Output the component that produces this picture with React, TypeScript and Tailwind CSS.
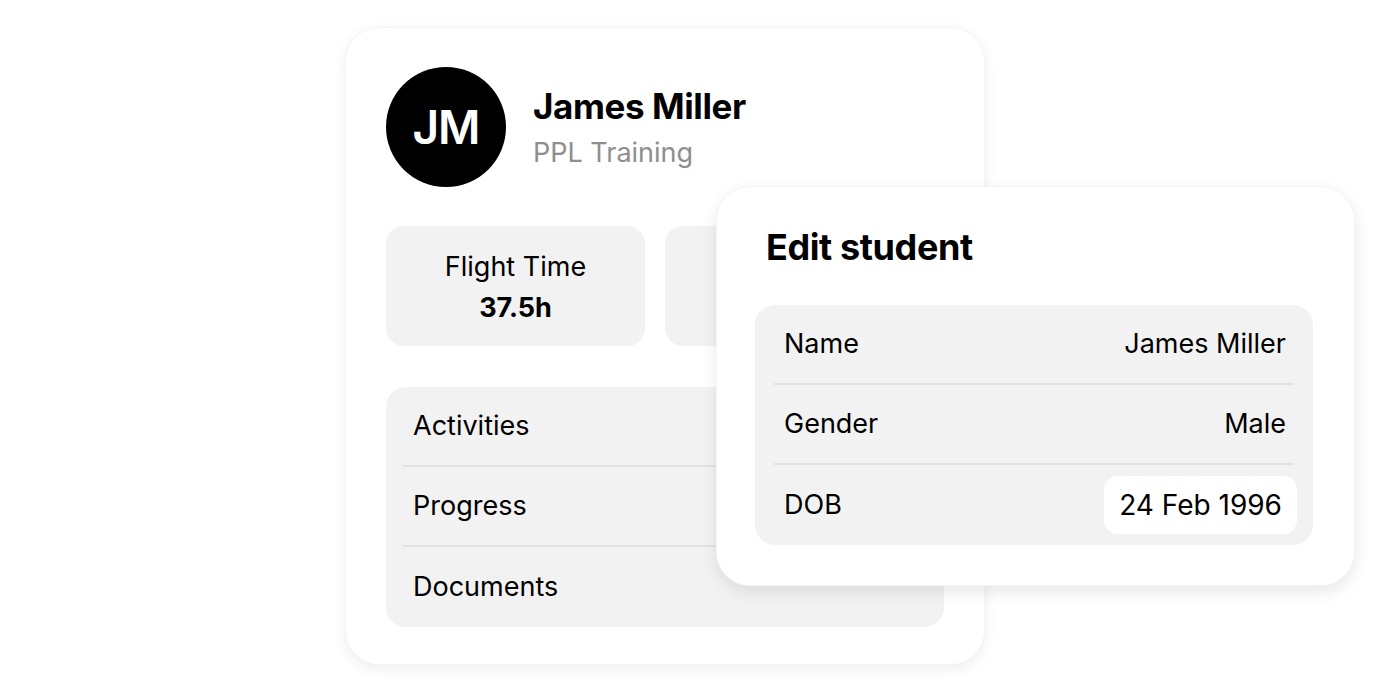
import React from 'react';

const font = { fontFamily: 'Inter, "Noto Sans", sans-serif' };

const menuItems = ['Activities', 'Progress', 'Documents'];

const fields: { label: string; value: string; picker?: boolean }[] = [
  { label: 'Name', value: 'James Miller' },
  { label: 'Gender', value: 'Male' },
  { label: 'DOB', value: '24 Feb 1996', picker: true },
];

function StatCard({ label, value }: { label?: string; value?: string }) {
  return (
    <div className="h-[120px] rounded-[18px] bg-[#f2f2f2] flex flex-col items-center justify-center pt-[2px]">
      {label && <span className="text-[27px] leading-[41px] text-black">{label}</span>}
      {value && <span className="text-[27px] leading-[41px] font-bold text-black">{value}</span>}
    </div>
  );
}

export default function App() {
  return (
    <div className="relative w-[1400px] h-[700px] bg-white overflow-hidden" style={font}>
      {/* Student profile card */}
      <div className="ml-[345px] mt-[27px] w-[640px] h-[638px] rounded-[34px] bg-white border border-black/[0.04] shadow-[0_4px_14px_rgba(0,0,0,0.07)] px-[40px] pt-[39px]">
        <div className="flex items-center gap-[27px]">
          <div className="w-[120px] h-[120px] rounded-full bg-black flex items-center justify-center">
            <span className="text-white text-[46px] font-semibold tracking-[-1px]">JM</span>
          </div>
          <div className="flex flex-col pt-[5px]">
            <span className="text-[35px] leading-[46px] font-bold text-black tracking-[-0.4px]">James Miller</span>
            <span className="text-[27px] leading-[48px] text-[#8e8e8e]">PPL Training</span>
          </div>
        </div>

        <div className="mt-[39px] grid grid-cols-[259px_259px] gap-[20px]">
          <StatCard label="Flight Time" value="37.5h" />
          {/* second stat card is covered by the dialog */}
          <StatCard />
        </div>

        <div className="mt-[41px] w-[558px] rounded-[20px] bg-[#f2f2f2] pl-[17px]">
          {menuItems.map((item, i) => (
            <div
              key={item}
              className={`h-[80px] flex items-center pl-[10px] ${i < menuItems.length - 1 ? 'border-b-2 border-[#e2e2e2]' : ''}`}
            >
              <span className="text-[27px] text-black">{item}</span>
            </div>
          ))}
        </div>
      </div>

      {/* Edit dialog overlay */}
      <div className="absolute left-[716px] top-[186px] w-[639px] h-[400px] rounded-[34px] bg-white border border-black/[0.04] shadow-[0_6px_16px_rgba(0,0,0,0.09)] pl-[38px] pt-[40px]">
        <h2 className="text-[36px] leading-[40px] font-bold text-black tracking-[-0.4px] pl-[11px]">Edit student</h2>
        <div className="mt-[38px] w-[558px] rounded-[20px] bg-[#f2f2f2] px-[19px]">
          {fields.map((f, i) => (
            <div
              key={f.label}
              className={`h-[80px] flex items-center justify-between pl-[10px] ${i < fields.length - 1 ? 'border-b-2 border-[#e2e2e2]' : ''}`}
            >
              <span className="text-[27px] text-black">{f.label}</span>
              {f.picker ? (
                <span className="-mr-[3px] h-[58px] px-[15px] rounded-[14px] bg-white flex items-center text-[28px] text-black">
                  {f.value}
                </span>
              ) : (
                <span className="pr-[8px] text-[27px] text-black">{f.value}</span>
              )}
            </div>
          ))}
        </div>
      </div>
    </div>
  );
}
